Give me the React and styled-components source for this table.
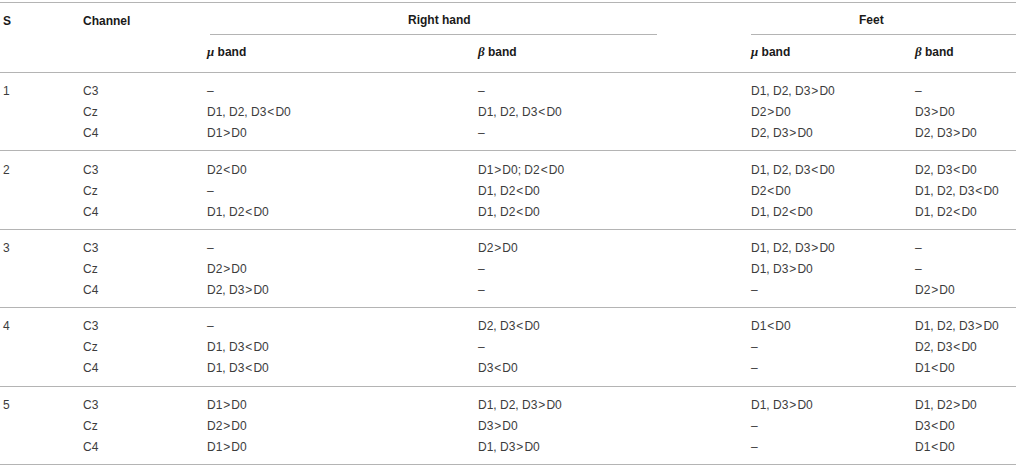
import React from 'react'
import styled, { createGlobalStyle } from 'styled-components'

const groups = [
    {
        s: '1',
        rows: [
            ['C3', '–', '–', 'D1, D2, D3>D0', '–'],
            ['Cz', 'D1, D2, D3<D0', 'D1, D2, D3<D0', 'D2>D0', 'D3>D0'],
            ['C4', 'D1>D0', '–', 'D2, D3>D0', 'D2, D3>D0'],
        ],
    },
    {
        s: '2',
        rows: [
            ['C3', 'D2<D0', 'D1>D0; D2<D0', 'D1, D2, D3<D0', 'D2, D3<D0'],
            ['Cz', '–', 'D1, D2<D0', 'D2<D0', 'D1, D2, D3<D0'],
            ['C4', 'D1, D2<D0', 'D1, D2<D0', 'D1, D2<D0', 'D1, D2<D0'],
        ],
    },
    {
        s: '3',
        rows: [
            ['C3', '–', 'D2>D0', 'D1, D2, D3>D0', '–'],
            ['Cz', 'D2>D0', '–', 'D1, D3>D0', '–'],
            ['C4', 'D2, D3>D0', '–', '–', 'D2>D0'],
        ],
    },
    {
        s: '4',
        rows: [
            ['C3', '–', 'D2, D3<D0', 'D1<D0', 'D1, D2, D3>D0'],
            ['Cz', 'D1, D3<D0', '–', '–', 'D2, D3<D0'],
            ['C4', 'D1, D3<D0', 'D3<D0', '–', 'D1<D0'],
        ],
    },
    {
        s: '5',
        rows: [
            ['C3', 'D1>D0', 'D1, D2, D3>D0', 'D1, D3>D0', 'D1, D2>D0'],
            ['Cz', 'D2>D0', 'D3>D0', '–', 'D3<D0'],
            ['C4', 'D1>D0', 'D1, D3>D0', '–', 'D1<D0'],
        ],
    },
]

// put a little air around the < and > signs, as the typeset original does
function Value({ text }) {
    const parts = text.split(/([<>])/)
    return (
        <>
            {parts.map((p, i) =>
                p === '<' || p === '>' ? <Op key={i}>{p}</Op> : <React.Fragment key={i}>{p}</React.Fragment>
            )}
        </>
    )
}

function Band({ sym }) {
    return (
        <>
            <Greek>{sym}</Greek> band
        </>
    )
}

function App() {
    return (
        <>
            <GlobalStyle />
            <Table>
                <Head>
                    <HeadCell $col="1" $row="1">S</HeadCell>
                    <HeadCell $col="2" $row="1">Channel</HeadCell>
                    <GroupHead $col="3 / 5" $indent={198} $left={3} $right={94}>Right hand</GroupHead>
                    <GroupHead $col="5 / 7" $indent={108} $left={0} $right={0}>Feet</GroupHead>
                    <BandCell $col="3"><Band sym="μ" /></BandCell>
                    <BandCell $col="4"><Band sym="β" /></BandCell>
                    <BandCell $col="5"><Band sym="μ" /></BandCell>
                    <BandCell $col="6"><Band sym="β" /></BandCell>
                </Head>
                {groups.map((g) => (
                    <Group key={g.s}>
                        {g.rows.map((r, i) => (
                            <React.Fragment key={i}>
                                <Cell>{i === 0 ? g.s : ''}</Cell>
                                {r.map((v, j) => (
                                    <Cell key={j}><Value text={v} /></Cell>
                                ))}
                            </React.Fragment>
                        ))}
                    </Group>
                ))}
            </Table>
        </>
    )
}

export default App

const GlobalStyle = createGlobalStyle`
    body{
        margin: 0;
        background: #fff;
        font-family: "Liberation Sans", Arial, sans-serif;
    }
`

const cols = '80px 124px 271px 273px 164px 1fr'

const Table = styled.div`
    width: 1016px;
    margin-top: 2px;
    border-top: 1px solid #b4b4b4;
    padding-left: 3px;
    box-sizing: border-box;
`

const Head = styled.div`
    display: grid;
    grid-template-columns: ${cols};
    grid-template-rows: 32px 37px;
    border-bottom: 1px solid #b4b4b4;
    margin-left: -3px;
    padding-left: 3px;
`

const HeadCell = styled.div`
    grid-column: ${(p) => p.$col};
    grid-row: ${(p) => p.$row};
    align-self: center;
    font-size: 12px;
    font-weight: bold;
    color: #1a1a1a;
    padding-top: 3px;
`

const GroupHead = styled.div`
    grid-column: ${(p) => p.$col};
    grid-row: 1;
    margin-left: ${(p) => p.$left}px;
    margin-right: ${(p) => p.$right}px;
    padding-left: ${(p) => p.$indent}px;
    border-bottom: 1px solid #b4b4b4;
    display: flex;
    align-items: center;
    padding-top: 2px;
    font-size: 12px;
    font-weight: bold;
    color: #1a1a1a;
`

const BandCell = styled.div`
    grid-column: ${(p) => p.$col};
    grid-row: 2;
    align-self: center;
    font-size: 12px;
    font-weight: bold;
    color: #1a1a1a;
    padding-bottom: 3px;
`

const Greek = styled.i`
    font-family: "Liberation Serif", "Times New Roman", serif;
    font-size: 13px;
    font-weight: bold;
`

const Group = styled.div`
    display: grid;
    grid-template-columns: ${cols};
    grid-auto-rows: 21px;
    padding: 7.7px 0 6.7px 3px;
    margin-left: -3px;
    border-bottom: 1px solid #b4b4b4;
`

const Cell = styled.div`
    display: flex;
    align-items: center;
    font-size: 12px;
    color: #3c3c3c;
    white-space: nowrap;
`

const Op = styled.span`
    margin: 0 1px;
`
